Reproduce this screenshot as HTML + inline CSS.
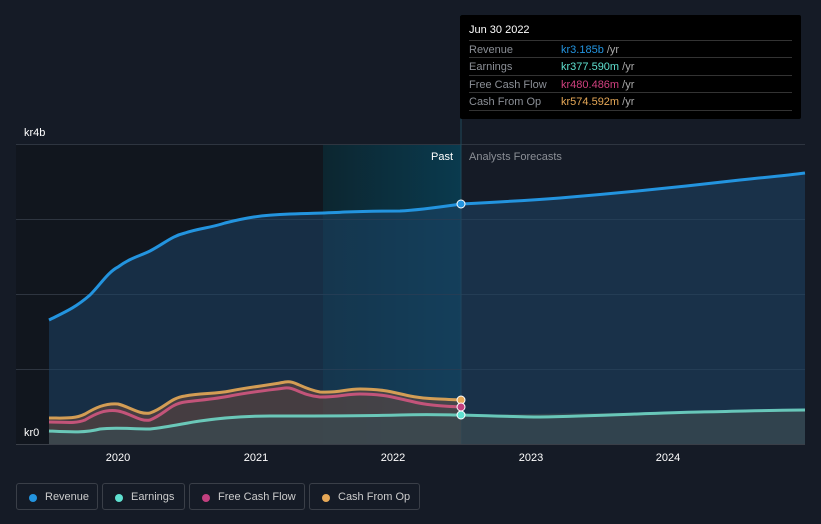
<!DOCTYPE html>
<html><head><meta charset="utf-8"><style>
html,body{margin:0;padding:0;background:#151b26;width:821px;height:524px;overflow:hidden;font-family:"Liberation Sans",sans-serif;}
.tt{position:absolute;left:460px;top:15px;width:341px;height:104px;background:#000;border-radius:2px;}
.tt .h{position:absolute;left:9px;top:9px;color:#fff;font-size:11px;}
.tt .r{position:absolute;left:9px;width:323px;height:17px;border-top:1px solid #333;font-size:11px;line-height:18px;color:#8b8f96;}
.tt .r span{position:absolute;left:92px;}
.tt .r i{font-style:normal;color:#aaa;}
.lg{position:absolute;top:483px;height:27px;border:1px solid #3a3f48;border-radius:3px;color:#ccc;font-size:11px;line-height:27px;box-sizing:border-box;}
.lg b{position:absolute;left:12px;top:10px;width:8px;height:8px;border-radius:50%;}
.lg span{position:absolute;left:28px;}
</style></head><body>
<svg width="821" height="524" style="position:absolute;left:0;top:0">
<defs>
<linearGradient id="hl" x1="0" x2="1" y1="0" y2="0"><stop offset="0" stop-color="#0c2630"/><stop offset="1" stop-color="#0a3a4e"/></linearGradient>
</defs>
<rect x="16" y="144" width="307" height="300" fill="#11161e"/>
<rect x="323" y="144" width="138" height="300" fill="url(#hl)"/>
<g stroke="#2e3540" stroke-width="1">
<line x1="16" x2="805" y1="144.5" y2="144.5"/><line x1="16" x2="805" y1="219.5" y2="219.5"/><line x1="16" x2="805" y1="294.5" y2="294.5"/><line x1="16" x2="805" y1="369.5" y2="369.5"/>
</g>
<line x1="461" x2="461" y1="15" y2="444" stroke="#1f4a5a" stroke-width="1"/>
<path d="M49 320 C65 312,75 308,90 295 C100 285,108 272,118 267 C130 258,140 256,150 251 C165 243,172 236,185 233 C200 228,210 228,225 223 C245 218,260 215,290 214 C320 213,330 213,345 212 C370 211,390 211,400 211 C420 210,440 207,461 204 C500 202,520 201,560 198 C620 193,680 187,740 180 C770 177,790 175,805 173 L805 444 L49 444Z" fill="#1d4466" opacity="0.55"/>
<path d="M49 418 C65 418,75 419,85 414 C95 408,105 403,118 404 C130 407,140 415,150 413 C165 408,170 398,185 396 C200 393,215 394,230 391 C250 387,270 385,285 382 C295 380,300 388,320 392 C340 393,345 389,360 389 C385 389,395 393,410 396 C425 399,440 399,461 400 L461 444 L49 444Z" fill="#6b4a3e" opacity="0.55"/>
<path d="M49 431 C70 432,85 433,100 429 C115 427,130 429,150 429 C170 427,185 423,200 421 C220 418,240 416,270 416 C330 416,360 416,400 415 C430 414,450 415,461 415 L805 410 L805 444 L49 444Z" fill="#3a4a50" opacity="0.75"/>
<path d="M49 320 C65 312,75 308,90 295 C100 285,108 272,118 267 C130 258,140 256,150 251 C165 243,172 236,185 233 C200 228,210 228,225 223 C245 218,260 215,290 214 C320 213,330 213,345 212 C370 211,390 211,400 211 C420 210,440 207,461 204 C500 202,520 201,560 198 C620 193,680 187,740 180 C770 177,790 175,805 173" fill="none" stroke="#2394df" stroke-width="3"/>
<path d="M49 418 C65 418,75 419,85 414 C95 408,105 403,118 404 C130 407,140 415,150 413 C165 408,170 398,185 396 C200 393,215 394,230 391 C250 387,270 385,285 382 C295 380,300 388,320 392 C340 393,345 389,360 389 C385 389,395 393,410 396 C425 399,440 399,461 400" fill="none" stroke="#e6a857" stroke-width="3" opacity="0.9"/>
<path d="M49 422 C65 422,75 424,85 420 C95 414,105 409,118 411 C130 413,140 422,150 420 C165 414,170 404,185 402 C200 400,215 399,230 396 C250 392,270 390,285 388 C295 387,300 395,320 397 C340 397,345 394,360 394 C385 394,395 398,410 401 C425 405,440 406,461 407" fill="none" stroke="#d0577f" stroke-width="3" opacity="0.9"/>
<path d="M49 431 C70 432,85 433,100 429 C115 427,130 429,150 429 C170 427,185 423,200 421 C220 418,240 416,270 416 C330 416,360 416,400 415 C430 414,450 415,461 415 C500 416,520 417,540 417 C600 416,650 413,700 412 C750 411,780 410,805 410" fill="none" stroke="#6fd6c5" stroke-width="3" opacity="0.9"/>
<line x1="16" x2="805" y1="444.5" y2="444.5" stroke="#3a3f48"/>
<circle cx="461" cy="204" r="4" fill="#2394df" stroke="#fff" stroke-width="1"/>
<circle cx="461" cy="400" r="4" fill="#e6a857" stroke="#fff" stroke-width="1"/>
<circle cx="461" cy="407" r="4" fill="#c2407f" stroke="#fff" stroke-width="1"/>
<circle cx="461" cy="415" r="4" fill="#5fe0d0" stroke="#fff" stroke-width="1"/>
<g font-family="Liberation Sans,sans-serif" font-size="11" fill="#fff">
<text x="24" y="136">kr4b</text><text x="24" y="436">kr0</text>
<text x="453" y="160" text-anchor="end">Past</text>
<text x="469" y="160" fill="#8b8f96">Analysts Forecasts</text>
<text x="118" y="461" text-anchor="middle">2020</text><text x="256" y="461" text-anchor="middle">2021</text><text x="393" y="461" text-anchor="middle">2022</text><text x="531" y="461" text-anchor="middle">2023</text><text x="668" y="461" text-anchor="middle">2024</text>
</g>
</svg>
<div class="tt">
<div class="h">Jun 30 2022</div>
<div class="r" style="top:25px">Revenue<span style="color:#2394df">kr3.185b <i>/yr</i></span></div>
<div class="r" style="top:42px">Earnings<span style="color:#5fe0d0">kr377.590m <i>/yr</i></span></div>
<div class="r" style="top:60px">Free Cash Flow<span style="color:#d0407f">kr480.486m <i>/yr</i></span></div>
<div class="r" style="top:77px">Cash From Op<span style="color:#e6a857">kr574.592m <i>/yr</i></span></div>
<div style="position:absolute;left:9px;top:95px;width:323px;border-top:1px solid #333"></div>
</div>
<div class="lg" style="left:16px;width:82px"><b style="background:#2394df"></b><span>Revenue</span></div>
<div class="lg" style="left:102px;width:83px"><b style="background:#5fe0d0"></b><span>Earnings</span></div>
<div class="lg" style="left:189px;width:116px"><b style="background:#c2407f"></b><span>Free Cash Flow</span></div>
<div class="lg" style="left:309px;width:111px"><b style="background:#e6a857"></b><span>Cash From Op</span></div>
</body></html>
